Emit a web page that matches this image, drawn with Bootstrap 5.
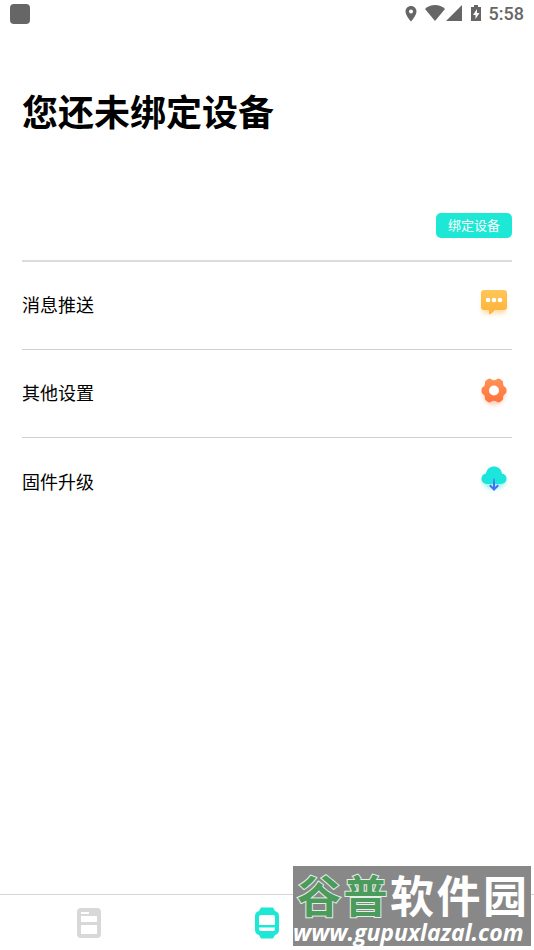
<!DOCTYPE html>
<html lang="zh-CN">
<head>
<meta charset="utf-8">
<meta name="viewport" content="width=device-width, initial-scale=1">
<title>设备</title>
<link rel="stylesheet" href="https://cdn.jsdelivr.net/npm/bootstrap@5.3.0/dist/css/bootstrap.min.css">
<style>
body { font-family: Roboto, "Noto Sans CJK SC", sans-serif; color: #000; background: #fff; }
.status-bar { height: 28px; padding: 0 10px; color: #666; font-size: 18px; line-height: 28px; font-weight: 500; }
.app-dot { width: 20px; height: 20px; border-radius: 4px; background: #666; }
.page-main { padding: 0 22px; }
.page-title { font-size: 36px; line-height: 48px; font-weight: 700; margin: 62px 0 0; }
.bind-row { height: 124px; padding-bottom: 22px; border-bottom: 2px solid #dcdcdc; }
.btn-bind { --bs-btn-color: #fff; --bs-btn-bg: #1ce8d5; --bs-btn-hover-color: #fff; --bs-btn-hover-bg: #16d3c1; --bs-btn-border-width: 0px; --bs-btn-border-radius: 5px; --bs-btn-font-size: 13px; --bs-btn-line-height: 24px; --bs-btn-padding-x: 12px; --bs-btn-padding-y: 0px; padding-top: 1px; }
.menu-row { height: 88px; color: #000; font-size: 18px; border-bottom: 1px solid #d0d0d0; }
.menu-row:last-child { border-bottom: 0; }
.menu-row svg { margin-bottom: 6px; overflow: visible; }
.tab-bar { height: 56px; border-top: 1px solid #d6d6d6; }
.site-stamp { right: 3px; bottom: 4px; width: 238px; height: 80px; padding-top: 4px; background: #888; color: #fff; white-space: nowrap; }
.stamp-name { font: oblique 6deg 700 44px/48px "Noto Sans CJK SC", sans-serif; padding: 0 4px; }
.stamp-green { color: #4b9b5c; -webkit-text-stroke: 2px #e4eee6; paint-order: stroke fill; }
.stamp-url { font: italic 700 23px/28px "Open Sans", sans-serif; }
</style>
<script src="https://cdn.jsdelivr.net/npm/bootstrap@5.3.0/dist/js/bootstrap.bundle.min.js" defer></script>
</head>
<body>
<div class="d-flex flex-column min-vh-100 position-relative">
  <header class="status-bar d-flex align-items-center justify-content-between">
    <span class="app-dot"></span>
    <div class="d-flex align-items-center">
      <svg width="76" height="20" viewBox="0 0 76 20" fill="#666" aria-hidden="true">
        <path fill-rule="evenodd" d="M6 2C2.900 2 .5 4.400 .5 7.500C.5 11.500 6 17.500 6 17.500S11.500 11.500 11.500 7.500C11.500 4.400 9.100 2 6 2ZM6 5.500A2 2 0 1 1 6 9.500A2 2 0 0 1 6 5.500Z"/>
        <path d="M20 5C25-.2 35-.2 40 5L30 17Z"/>
        <path d="M57 1V17H41Z"/>
        <path fill-rule="evenodd" d="M69 1H73V3H76V17H66V3H69ZM72 5L68 11H70.500V15L74.500 9H72Z"/>
      </svg>
      <span class="ms-2">5:58</span>
    </div>
  </header>
  <main class="page-main flex-grow-1">
    <h1 class="page-title">您还未绑定设备</h1>
    <div class="bind-row d-flex align-items-end justify-content-end">
      <button type="button" class="btn btn-bind">绑定设备</button>
    </div>
    <nav class="d-flex flex-column" aria-label="设备设置">
      <a href="#push" class="menu-row d-flex align-items-center justify-content-between text-decoration-none">
        <span>消息推送</span>
        <svg width="36" height="36" viewBox="0 0 36 36" aria-hidden="true">
          <defs><linearGradient id="gold" x2="0" y2="1"><stop stop-color="#ffc758"/><stop offset="1" stop-color="#ffb13a"/></linearGradient><filter id="soft" x="-50%" y="-50%" width="200%" height="200%"><feGaussianBlur stdDeviation="2"/></filter></defs>
          <rect x="6" y="9" width="24" height="20" rx="4" fill="#ffb13a" opacity=".4" filter="url(#soft)"/>
          <path d="M8 5H28Q31 5 31 8V22Q31 25 28 25H19L14.500 29Q13 30 13 28V25H8Q5 25 5 22V8Q5 5 8 5Z" fill="url(#gold)"/>
          <g fill="#fff"><circle cx="12" cy="15" r="2.300"/><circle cx="18" cy="15" r="2.300"/><circle cx="24" cy="15" r="2.300"/></g>
        </svg>
      </a>
      <a href="#settings" class="menu-row d-flex align-items-center justify-content-between text-decoration-none">
        <span>其他设置</span>
        <svg width="36" height="36" viewBox="0 0 36 36" aria-hidden="true">
          <defs><linearGradient id="orange" x2="0" y2="1"><stop stop-color="#ff9258"/><stop offset="1" stop-color="#ff743c"/></linearGradient></defs>
          <circle cx="18" cy="21" r="11" fill="#ff743c" opacity=".35" filter="url(#soft)"/>
          <path d="M12 6Q14 5 15.500 6.500Q18 8 20.500 6.500Q22 5 24 6L26 7.500Q27.500 8.500 27 10.500Q27 13 29 14Q30.500 14.500 30.500 16.500V18.500Q30.500 20.500 29 21Q27 22 27 24.500Q27.500 26.500 26 27.500L24 29Q22 30 20.500 28.500Q18 27 15.500 28.500Q14 30 12 29L10 27.500Q8.500 26.500 9 24.500Q9 22 7 21Q5.500 20.500 5.500 18.500V16.500Q5.500 14.500 7 14Q9 13 9 10.500Q8.500 8.500 10 7.500Z" fill="url(#orange)"/>
          <circle cx="18" cy="17.500" r="5" fill="#fff"/>
        </svg>
      </a>
      <a href="#upgrade" class="menu-row d-flex align-items-center justify-content-between text-decoration-none">
        <span>固件升级</span>
        <svg width="36" height="36" viewBox="0 0 36 36" aria-hidden="true">
          <defs><linearGradient id="blue" x2="0" y2="1"><stop stop-color="#28a7f0"/><stop offset=".5" stop-color="#456df5"/></linearGradient></defs>
          <ellipse cx="18" cy="21" rx="11" ry="7" fill="#1ce8d5" opacity=".45" filter="url(#soft)"/>
          <path d="M11 23C4 23 3.500 13.500 10 12.500C11 3 25 3 26 12.500C32.500 13.500 32 23 25 23Z" fill="#1ce5dc"/>
          <path d="M17 17.500H19V26L21.500 23.500L22.900 25L18 30L13.100 25L14.500 23.500L17 26Z" fill="url(#blue)"/>
        </svg>
      </a>
    </nav>
  </main>
  <nav class="tab-bar row g-0 align-items-center text-center" aria-label="主导航">
    <a href="#home" class="col" aria-label="首页">
      <svg width="26" height="32" viewBox="0 0 26 32" aria-hidden="true"><rect x="1" y="1" width="24" height="30" rx="4" fill="#d8d8d8"/><path d="M5 5H13V7H5ZM5 9H21V15H5ZM5 18H21V27H5Z" fill="#fff"/></svg>
    </a>
    <a href="#device" class="col" aria-label="设备">
      <svg width="26" height="32" viewBox="0 0 26 32" aria-hidden="true"><path d="M7 .5H19L21 4Q25 5 25 9V23Q25 27 21 28L19 31.500H7L5 28Q1 27 1 23V9Q1 5 5 4Z" fill="#1ce8d5"/><path d="M7 8H19Q21 8 21 10V18H5V10Q5 8 7 8ZM5 20.500H21V22Q21 24 19 24H7Q5 24 5 22Z" fill="#fff"/></svg>
    </a>
    <a href="#me" class="col" aria-label="我的">
      <svg width="26" height="32" viewBox="0 0 26 32" fill="#d8d8d8" aria-hidden="true"><circle cx="13" cy="10" r="6"/><path d="M2 29Q2 18 13 18T24 29Z"/></svg>
    </a>
  </nav>
  <div class="site-stamp position-absolute">
    <div class="stamp-name d-flex justify-content-between"><span class="stamp-green">谷</span><span class="stamp-green">普</span><span>软</span><span>件</span><span>园</span></div>
    <div class="stamp-url">www.gupuxlazal.com</div>
  </div>
</div>
</body>
</html>
